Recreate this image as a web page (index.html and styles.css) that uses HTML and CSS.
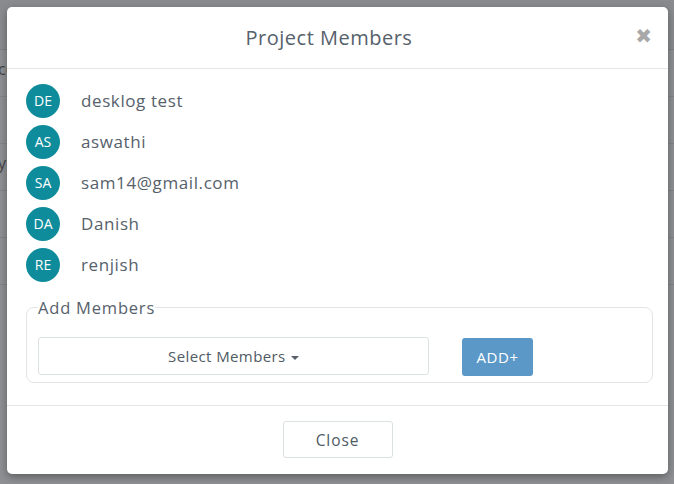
FILE: index.html
```html
<!DOCTYPE html>
<html>
<head>
<meta charset="utf-8">
<link rel="stylesheet" href="styles.css">
</head>
<body>
<div class="backdrop">
  <div class="bg-page">
    <div class="bg-top"></div>
    <div class="bg-row"><span class="bg-text">co</span></div>
    <div class="bg-row"></div>
    <div class="bg-row"><span class="bg-text">y</span></div>
    <div class="bg-row"></div>
    <div class="bg-row"></div>
    <div class="bg-row bg-last">
      <span class="bg-green"></span>
      <span class="bg-dots"><i class="d1"></i><i class="d2"></i><i class="d3"></i></span>
    </div>
  </div>
  <div class="modal">
    <div class="modal-header">
      <h4 class="modal-title">Project Members</h4>
      <span class="close-x">&#10006;</span>
    </div>
    <div class="modal-body">
      <ul class="members">
        <li class="member"><span class="avatar">DE</span><span class="name">desklog test</span></li>
        <li class="member"><span class="avatar">AS</span><span class="name">aswathi</span></li>
        <li class="member"><span class="avatar">SA</span><span class="name">sam14@gmail.com</span></li>
        <li class="member"><span class="avatar">DA</span><span class="name">Danish</span></li>
        <li class="member"><span class="avatar">RE</span><span class="name">renjish</span></li>
      </ul>
      <fieldset class="add-box">
        <legend>Add Members</legend>
        <div class="add-row">
          <button class="select-btn">Select Members <span class="caret"></span></button>
          <button class="add-btn">ADD+</button>
        </div>
      </fieldset>
    </div>
    <div class="modal-footer">
      <button class="close-btn">Close</button>
    </div>
  </div>
</div>
</body>
</html>
```

FILE: styles.css
```css
* { box-sizing: border-box; }
html, body { margin: 0; padding: 0; }
body {
  width: 674px;
  height: 484px;
  overflow: hidden;
  font-family: "Open Sans", "DejaVu Sans", sans-serif;
  background: #8f9194;
}
.backdrop {
  position: relative;
  width: 674px;
  height: 484px;
  overflow: hidden;
}
.bg-page {
  display: flex;
  flex-direction: column;
  height: 484px;
  background: #8e9093;
}
.bg-top {
  height: 50px;
  background: #898b8e;
  border-bottom: 1px solid #7d8083;
}
.bg-row {
  height: 47px;
  border-bottom: 1px solid #828588;
  position: relative;
  color: #444;
  font-size: 16px;
}
.bg-text { position: absolute; left: -2px; top: 8px; }
.bg-last { border-bottom: none; flex: 1; }
.bg-green {
  position: absolute;
  left: 163px;
  top: 145px;
  width: 68px;
  height: 20px;
  border-radius: 4px;
  background: #3d5a05;
}
.bg-dots { position: absolute; left: 558px; top: 138px; }
.bg-dots i {
  position: absolute;
  width: 26px; height: 26px; border-radius: 50%;
}
.d1 { left: 0; background: #0b4a55; }
.d2 { left: 24px; background: #3f5a0a; }
.d3 { left: 48px; background: #8f9194; border: 1px solid #777; }

.modal {
  position: absolute;
  left: 7px;
  top: 7px;
  width: 661px;
  height: 467px;
  background: #fff;
  border-radius: 5px;
  box-shadow: 0 3px 9px rgba(0,0,0,0.35);
  display: flex;
  flex-direction: column;
  color: #5c6670;
}
.modal-header {
  height: 62px;
  border-bottom: 1px solid #e5e5e5;
  display: flex;
  align-items: center;
  justify-content: center;
  padding-right: 17px;
  position: relative;
}
.modal-title {
  margin: 0;
  font-size: 20px;
  font-weight: 500;
  letter-spacing: 0.5px;
  color: #56616b;
}
.close-x {
  position: absolute;
  right: 16px;
  top: 15px;
  font-size: 20px;
  color: #a8a8a8;
  font-weight: bold;
}
.modal-body {
  padding: 15px 15px 22px 19px;
  flex: 1;
}
.members { list-style: none; margin: 0; padding: 0; display: flex; flex-direction: column; gap: 7px; }
.member { display: flex; align-items: center; height: 34px; }
.avatar {
  width: 34px; height: 34px; border-radius: 50%;
  background: #0f8c9b;
  color: #fff;
  font-size: 14px;
  font-weight: 500;
  display: flex; align-items: center; justify-content: center;
  margin-right: 21px;
}
.name { font-size: 17px; letter-spacing: 0.6px; color: #56616b; }
.add-box {
  margin: 14px 0 0 0;
  border: 1px solid #e2e5e8;
  border-radius: 8px;
  padding: 18px 20px 6px 11px;
}
.add-box legend {
  font-size: 16.5px;
  letter-spacing: 0.8px;
  padding: 0;
  color: #56616b;
}
.add-row { display: flex; align-items: center; gap: 33px; }
.select-btn {
  width: 391px;
  height: 38px;
  background: #fff;
  border: 1px solid #dde2e4;
  border-radius: 3px;
  font-family: inherit;
  font-size: 15px;
  font-weight: 500;
  letter-spacing: 0.4px;
  color: #4f5a64;
}
.caret {
  display: inline-block;
  width: 0; height: 0;
  border-left: 4px solid transparent;
  border-right: 4px solid transparent;
  border-top: 4px solid #56606a;
  vertical-align: middle;
  margin-left: 1px;
}
.add-btn {
  width: 71px;
  height: 38px;
  margin-top: 1px;
  background: #5b98c8;
  border: none;
  border-radius: 3px;
  color: #fff;
  font-family: inherit;
  font-size: 15px;
  font-weight: 500;
  letter-spacing: 0.6px;
}
.modal-footer {
  border-top: 1px solid #e5e5e5;
  height: 70px;
  display: flex;
  justify-content: center;
  align-items: center;
}
.close-btn {
  width: 110px;
  height: 37px;
  background: #fff;
  border: 1px solid #dbe0e2;
  border-radius: 3px;
  font-family: inherit;
  font-size: 15.5px;
  font-weight: 500;
  letter-spacing: 0.9px;
  color: #4f5a64;
}
```
